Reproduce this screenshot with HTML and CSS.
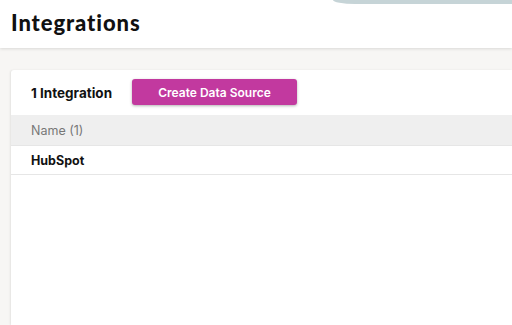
FILE: index.html
```html
<!DOCTYPE html>
<html lang="en">
<head>
<meta charset="UTF-8" />
<meta name="viewport" content="width=device-width, initial-scale=1" />
<title>Integrations</title>
<link rel="stylesheet" href="styles.css">
</head>
<body>

<div class="topbar-pill"></div>

<header class="page-header">
  <h1>Integrations</h1>
</header>

<main class="content">
  <section class="card">
    <div class="card-head">
      <span class="count">1 Integration</span>
      <button class="create-btn">Create Data Source</button>
    </div>
    <table class="list">
      <thead>
        <tr><th>Name (1)</th></tr>
      </thead>
      <tbody>
        <tr><td>HubSpot</td></tr>
      </tbody>
    </table>
  </section>
</main>

</body>
</html>
```

FILE: styles.css
```css
html, body {
  height: 100%;
}
body {
  margin: 0;
  background: #f7f6f4;
  font-family: Inter, 'Noto Sans', sans-serif;
  color: #111;
  display: flex;
  flex-direction: column;
  overflow: hidden;
}

/* pill peeking in at the top right */
.topbar-pill {
  position: absolute;
  top: 0;
  right: 0;
  width: 179px;
  height: 4px;
  background: #c6d4d7;
  border-bottom-left-radius: 22px 4px;
  z-index: 2;
}

.page-header {
  background: #fff;
  height: 48px;
  padding: 0 11px;
  display: flex;
  align-items: center;
  box-shadow: 0 1px 3px rgba(0, 0, 0, 0.12);
  position: relative;
  z-index: 1;
}
.page-header h1 {
  margin: 0;
  font-family: Lato, 'Noto Sans', sans-serif;
  font-weight: 900;
  font-size: 22px;
  letter-spacing: 0.9px;
  color: #111;
  padding-bottom: 3px;
}

.content {
  flex: 1;
  padding: 22px 0 0 11px;
  display: flex;
}
.card {
  flex: 1;
  background: #fff;
  border-radius: 3px 0 0 0;
  box-shadow: -1px 0 2px rgba(0, 0, 0, 0.08);
}

.card-head {
  height: 45px;
  padding: 0 20px;
  display: flex;
  align-items: center;
  gap: 18px;
}
.count {
  font-size: 13.5px;
  font-weight: 700;
  color: #111;
  width: 83px;
  white-space: nowrap;
}
.create-btn {
  width: 165px;
  height: 26px;
  border: none;
  border-radius: 3px;
  background: #c2399f;
  color: #fff;
  font-family: Inter, 'Noto Sans', sans-serif;
  font-size: 12px;
  font-weight: 600;
  box-shadow: 0 1px 3px rgba(0, 0, 0, 0.3);
  cursor: pointer;
  margin-top: -1px;
}

.list {
  width: 100%;
  border-collapse: collapse;
}
.list th {
  background: #efefef;
  height: 30px;
  padding: 0 20px;
  text-align: left;
  font-size: 12.5px;
  font-weight: 400;
  color: #777;
  border-bottom: 1px solid #e6e6e6;
}
.list td {
  height: 28px;
  padding: 0 20px;
  font-size: 12.5px;
  font-weight: 700;
  color: #111;
  border-bottom: 1px solid #e6e6e6;
}
```
